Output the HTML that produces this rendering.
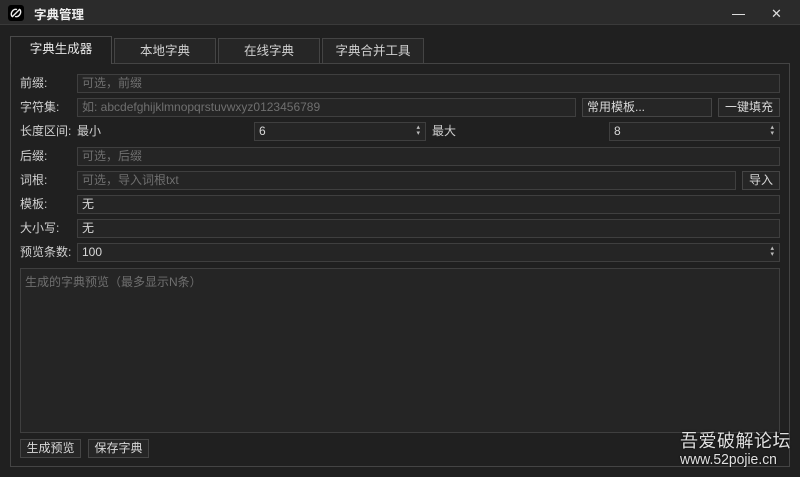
<!DOCTYPE html><html><head><meta charset="utf-8"><style>
*{box-sizing:border-box;margin:0;padding:0}
body{width:800px;height:477px;background:#202020;font-family:"Liberation Sans","Noto Sans CJK SC",sans-serif;font-size:12px;color:#d4d4d4;position:relative;overflow:hidden}
.a{position:absolute}
.tb{left:0;top:0;width:800px;height:25px;background:#2b2b2b;border-bottom:1px solid #3a3a3a}
.in{position:absolute;height:19px;border:1px solid #3f3f3f;background:#252525;padding-left:4px;line-height:17px;color:#d8d8d8}
.ph{color:#6f6f6f}
.lb{position:absolute;left:20px;line-height:18px;color:#d0d0d0}
.bt{position:absolute;height:19px;border:1px solid #454545;background:#262626;text-align:center;line-height:17px;color:#d8d8d8}
.tab{position:absolute;top:38px;height:25px;border:1px solid #444;border-bottom:none;background:#262626;text-align:center;line-height:24px;color:#d0d0d0;font-size:12.5px}
.sp{position:absolute;right:5px;top:2px;font-size:7px;line-height:6px;color:#bbb}
</style></head><body>
<div class="a tb"></div>
<div class="a" style="left:8px;top:5px;width:16px;height:16px;background:#000;border-radius:3px"><svg width="16" height="16" viewBox="0 0 16 16"><path d="M4 11.5C2 8 5 3.5 9 4.5M12 4.5C14 8 11 12.5 7 11.5M4 12L12 4" stroke="#eee" stroke-width="1.4" fill="none"/></svg></div>
<div class="a" style="left:34px;top:4px;font-size:12.5px;font-weight:bold;color:#eee">字典管理</div>
<div class="a" style="left:732px;top:14px;width:13px;height:1px;background:#ddd"></div>
<div class="a" style="left:771px;top:6px;font-size:13px;color:#ddd">✕</div>
<div class="a" style="left:10px;top:63px;width:780px;height:404px;border:1px solid #444"></div>
<div class="tab" style="left:10px;top:36px;width:102px;height:28px;background:#202020;color:#e8e8e8;border-color:#4a4a4a">字典生成器</div>
<div class="tab" style="left:114px;width:102px">本地字典</div>
<div class="tab" style="left:218px;width:102px">在线字典</div>
<div class="tab" style="left:322px;width:102px">字典合并工具</div>

<div class="lb" style="top:74px">前缀:</div><div class="in ph" style="left:77px;top:74px;width:703px">可选，前缀</div>
<div class="lb" style="top:98px">字符集:</div><div class="in ph" style="left:77px;top:98px;width:499px">如: abcdefghijklmnopqrstuvwxyz0123456789</div>
<div class="bt" style="left:582px;top:98px;width:130px;text-align:left;padding-left:4px">常用模板...</div>
<div class="bt" style="left:718px;top:98px;width:62px">一键填充</div>
<div class="lb" style="top:122px">长度区间:</div><div class="lb" style="left:77px;top:122px">最小</div>
<div class="in" style="left:254px;top:122px;width:172px">6<div class="sp">▴<br>▾</div></div>
<div class="lb" style="left:432px;top:122px">最大</div>
<div class="in" style="left:609px;top:122px;width:171px">8<div class="sp">▴<br>▾</div></div>
<div class="lb" style="top:147px">后缀:</div><div class="in ph" style="left:77px;top:147px;width:703px">可选，后缀</div>
<div class="lb" style="top:171px">词根:</div><div class="in ph" style="left:77px;top:171px;width:659px">可选，导入词根txt</div>
<div class="bt" style="left:742px;top:171px;width:38px">导入</div>
<div class="lb" style="top:195px">模板:</div><div class="in" style="left:77px;top:195px;width:703px">无</div>
<div class="lb" style="top:219px">大小写:</div><div class="in" style="left:77px;top:219px;width:703px">无</div>
<div class="lb" style="top:243px">预览条数:</div><div class="in" style="left:77px;top:243px;width:703px">100<div class="sp">▴<br>▾</div></div>
<div class="in ph" style="left:20px;top:268px;width:760px;height:165px;padding:5px 4px;line-height:16px">生成的字典预览（最多显示N条）</div>
<div class="bt" style="left:20px;top:439px;width:61px">生成预览</div>
<div class="bt" style="left:88px;top:439px;width:61px">保存字典</div>
<div class="a" style="left:680px;top:427px;font-size:18px;letter-spacing:0.5px;color:#e0e0e0;text-shadow:0 0 2px #000">吾爱破解论坛</div>
<div class="a" style="left:680px;top:451px;font-size:15px;color:#e0e0e0;text-shadow:0 0 2px #000;transform:scaleX(0.93);transform-origin:left">www.52pojie.cn</div>
</body></html>
